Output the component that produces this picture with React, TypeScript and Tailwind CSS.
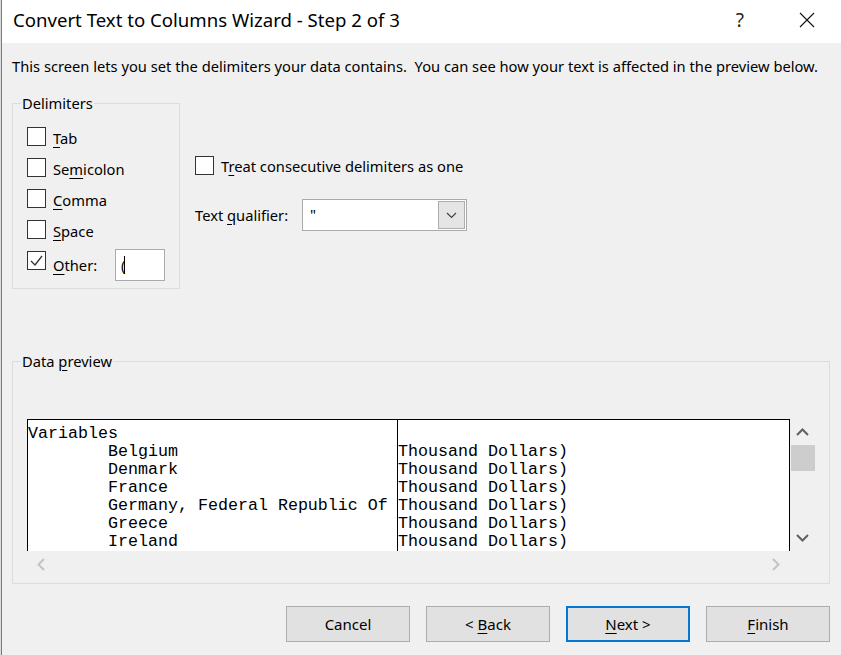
import React from "react";

// Windows-style "Convert Text to Columns Wizard" dialog, step 2

const ui = "font-['Noto_Sans',sans-serif]";
const mono = "font-['Liberation_Mono',monospace]";

function CheckBox({ checked = false }: { checked?: boolean }) {
  return (
    <div className="w-[19px] h-[19px] shrink-0 border border-[#333333] bg-white flex items-center justify-center">
      {checked && (
        <svg width="17" height="17" viewBox="0 0 17 17">
          <polyline points="3,9 7,13 14,4" fill="none" stroke="#333333" strokeWidth="1.3" />
        </svg>
      )}
    </div>
  );
}

function Chevron({ dir, color }: { dir: "up" | "down" | "left" | "right"; color: string }) {
  const d = {
    up: "M1 8 L6.5 2.5 L12 8",
    down: "M1 2 L6.5 7.5 L12 2",
    left: "M8 1 L2.5 6.5 L8 12",
    right: "M2 1 L7.5 6.5 L2 12",
  }[dir];
  const vertical = dir === "up" || dir === "down";
  return (
    <svg width={vertical ? 13 : 10} height={vertical ? 10 : 13} viewBox={vertical ? "0 0 13 10" : "0 0 10 13"}>
      <path d={d} fill="none" stroke={color} strokeWidth="2" />
    </svg>
  );
}

const delimiters: { pre: string; key: string; post: string }[] = [
  { pre: "", key: "T", post: "ab" },
  { pre: "Se", key: "m", post: "icolon" },
  { pre: "", key: "C", post: "omma" },
  { pre: "", key: "S", post: "pace" },
];

const rows: [string, string][] = [
  ["Variables", ""],
  ["        Belgium", "Thousand Dollars)"],
  ["        Denmark", "Thousand Dollars)"],
  ["        France", "Thousand Dollars)"],
  ["        Germany, Federal Republic Of", "Thousand Dollars)"],
  ["        Greece", "Thousand Dollars)"],
  ["        Ireland", "Thousand Dollars)"],
];

export default function App() {
  return (
    <div className={`w-[841px] h-[655px] bg-[#f0f0f0] flex overflow-hidden text-black ${ui}`}>
      {/* edge of the window behind */}
      <div className="w-[1px] bg-[#dadada]" />
      <div className="w-[1px] bg-[#7c7c7c]" />

      <div className="flex-1 flex flex-col">
        {/* Title bar */}
        <div className="h-[43px] bg-white flex items-center">
          <div className="pl-[11px] text-[18.6px] leading-[26px] -mt-[3px]">Convert Text to Columns Wizard - Step 2 of 3</div>
          <div className="ml-auto flex items-center -mt-[3px]">
            <span className="text-[19px] leading-[24px] text-[#222]">?</span>
            <div className="ml-[55px] mr-[26px]">
              <svg width="16" height="16" viewBox="0 0 16 16">
                <path d="M1 1 L15 15 M15 1 L1 15" stroke="#111" strokeWidth="1.1" />
              </svg>
            </div>
          </div>
        </div>

        {/* Description */}
        <div className="mt-[13px] pl-[10px] text-[14.7px] leading-[20px]">
          This screen lets you set the delimiters your data contains.&nbsp; You can see how your text is affected in the preview below.
        </div>

        {/* Delimiters + options */}
        <div className="mt-[17px] flex text-[14.7px]">
          <fieldset className="ml-[10px] w-[168px] border border-[#dcdcdc] pl-[14px] pt-[14px] pb-[7px]">
            <legend className="-ml-[6px] px-[1px] leading-[20px]">Delimiters</legend>
            <div className="flex flex-col gap-[12px]">
              {delimiters.map((d) => (
                <div key={d.post} className="flex items-start h-[19px]">
                  <CheckBox />
                  <span className="ml-[7px] mt-[2px] leading-[19px]">
                    {d.pre}
                    <u className="underline-offset-[3px]">{d.key}</u>
                    {d.post}
                  </span>
                </div>
              ))}
              <div className="flex items-start">
                <CheckBox checked />
                <span className="ml-[7px] mt-[5px] w-[62px] leading-[19px]">
                  <u className="underline-offset-[3px]">O</u>ther:
                </span>
                <div className="-mt-[2px] w-[50px] h-[32px] bg-white border border-[#ababab] flex items-center pl-[5px]">
                  <span className="leading-[20px]">(</span>
                  <div className="w-[1px] h-[18px] bg-black -ml-[1px]" />
                </div>
              </div>
            </div>
          </fieldset>

          <div className="ml-[15px] flex flex-col">
            <div className="mt-[63px] flex items-start">
              <CheckBox />
              <span className="ml-[7px] mt-[1px] leading-[19px]">
                T<u className="underline-offset-[3px]">r</u>eat consecutive delimiters as one
              </span>
            </div>
            <div className="mt-[23px] flex items-center h-[32px]">
              <span className="w-[107px] leading-[20px]">
                Text <u className="underline-offset-[3px]">q</u>ualifier:
              </span>
              <div className="w-[165px] h-[32px] bg-white border border-[#ababab] flex items-stretch">
                <span className="flex-1 pl-[7px] leading-[28px]">"</span>
                <div className="w-[27px] m-[1px] bg-[#e5e5e5] border border-[#adadad] flex items-center justify-center">
                  <svg width="11" height="7" viewBox="0 0 11 7">
                    <path d="M1 1 L5.5 5.5 L10 1" fill="none" stroke="#404040" strokeWidth="1.1" />
                  </svg>
                </div>
              </div>
            </div>
          </div>
        </div>

        {/* Data preview */}
        <fieldset className="mt-[62px] ml-[10px] w-[818px] border border-[#dcdcdc] pl-[14px] pr-[14px] pt-[48px] pb-[6px] text-[14.7px]">
          <legend className="-ml-[6px] px-[1px] leading-[20px]">
            Data <u className="underline-offset-[3px]">p</u>review
          </legend>
          <div className="flex">
            <div className="flex flex-col">
              <div className={`w-[763px] h-[132px] bg-white border-t border-l border-r border-black flex overflow-hidden ${mono} text-[16.67px] leading-[18px] whitespace-pre`}>
                <div className="w-[369px] pt-[5px]">
                  {rows.map((r, i) => (
                    <div key={i}>{r[0]}</div>
                  ))}
                </div>
                <div className="flex-1 border-l border-black pt-[5px]">
                  {rows.map((r, i) => (
                    <div key={i}>{r[1] || " "}</div>
                  ))}
                </div>
              </div>
              <div className="h-[26px] flex items-center justify-between pl-[9px] pr-[9px]">
                <Chevron dir="left" color="#c4c4c4" />
                <Chevron dir="right" color="#c4c4c4" />
              </div>
            </div>
            <div className="w-[25px] h-[132px] flex flex-col">
              <div className="h-[26px] flex items-center justify-center">
                <Chevron dir="up" color="#606060" />
              </div>
              <div className="h-[26px] ml-[1px] bg-[#cdcdcd]" />
              <div className="flex-1" />
              <div className="h-[26px] flex items-center justify-center">
                <Chevron dir="down" color="#606060" />
              </div>
            </div>
          </div>
        </fieldset>

        {/* Buttons */}
        <div className="mt-[22px] pr-[11px] flex justify-end gap-[16px] text-[15px]">
          <button className="w-[124px] h-[36px] bg-[#e1e1e1] border border-[#adadad]">Cancel</button>
          <button className="w-[124px] h-[36px] bg-[#e1e1e1] border border-[#adadad]">
            &lt; <u className="underline-offset-[3px]">B</u>ack
          </button>
          <button className="w-[124px] h-[36px] bg-[#e1e1e1] border-2 border-[#0078d7]">
            <u className="underline-offset-[3px]">N</u>ext &gt;
          </button>
          <button className="w-[124px] h-[36px] bg-[#e1e1e1] border border-[#adadad]">
            <u className="underline-offset-[3px]">F</u>inish
          </button>
        </div>
      </div>
    </div>
  );
}
